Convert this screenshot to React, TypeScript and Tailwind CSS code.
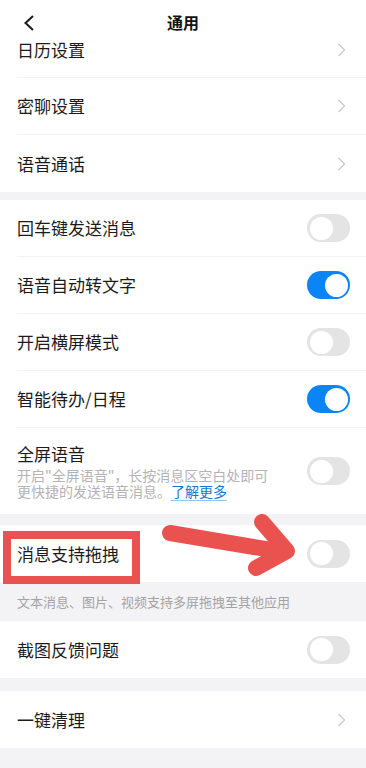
import React from "react";

function Toggle({ on }: { on?: boolean }) {
  return (
    <div
      className={
        on
          ? "flex h-[28px] w-[43px] shrink-0 items-center justify-end rounded-full bg-[#0b84f5] p-[2.5px]"
          : "flex h-[28px] w-[43px] shrink-0 items-center justify-start rounded-full bg-[#e4e4e4] p-[2.5px]"
      }
    >
      <div className="h-[23px] w-[23px] rounded-full bg-white" />
    </div>
  );
}

function Chevron() {
  return (
    <svg width="9" height="14" viewBox="0 0 9 14" className="shrink-0">
      <polyline points="1.5,1 7.5,7 1.5,13" fill="none" stroke="#c9c9c9" strokeWidth="1.3" />
    </svg>
  );
}

function Row({
  label,
  toggle,
  on,
  last,
  className = "h-[57px]",
}: {
  label: string;
  toggle?: boolean;
  on?: boolean;
  last?: boolean;
  className?: string;
}) {
  return (
    <div className="bg-white pl-[17px]">
      <div
        className={`flex items-center justify-between ${className} ${
          toggle ? "pr-[16px]" : "pr-[20px]"
        } ${last ? "" : "border-b border-[#f3f3f3]"}`}
      >
        <span className="text-[17px] leading-[22px] text-[#1b1b1b]">{label}</span>
        {toggle ? <Toggle on={on} /> : <Chevron />}
      </div>
    </div>
  );
}

export default function App() {
  return (
    <div className="relative min-h-[768px] w-full bg-[#f3f3f5] font-['Noto_Sans_CJK_SC','Noto_Sans',sans-serif]">
      {/* header */}
      <div className="grid h-[36px] grid-cols-[1fr_auto_1fr] items-start bg-white pt-[11px]">
        <div className="pl-[23px] pt-[4px]">
          <svg width="12" height="16" viewBox="0 0 12 16">
            <polyline points="10,1 2.5,8 10,15" fill="none" stroke="#1b1b1b" strokeWidth="2" />
          </svg>
        </div>
        <h1 className="text-[16px] font-bold leading-[22px] text-[#111]">通用</h1>
        <div />
      </div>

      <Row label="日历设置" className="h-[42px] pb-[14px]" />
      <Row label="密聊设置" />
      <Row label="语音通话" last />

      <div className="h-[8px]" />

      <Row label="回车键发送消息" toggle />
      <Row label="语音自动转文字" toggle on />
      <Row label="开启横屏模式" toggle />
      <Row label="智能待办/日程" toggle on />
      <div className="bg-white pl-[17px]">
        <div className="flex h-[86px] items-center justify-between pr-[16px]">
          <div className="flex flex-col">
            <span className="text-[17px] leading-[22px] text-[#1b1b1b]">全屏语音</span>
            <span className="mt-[2px] text-[14px] leading-[16px] text-[#b3b3b3]">
              开启"全屏语音"，长按消息区空白处即可
            </span>
            <span className="text-[14px] leading-[16px] text-[#b3b3b3]">
              更快捷的发送语音消息。
              <span className="text-[#1677d2] underline decoration-[#8cc4f2] underline-offset-[3px]">
                了解更多
              </span>
            </span>
          </div>
          <Toggle />
        </div>
      </div>

      <div className="h-[11px]" />

      <Row label="消息支持拖拽" toggle last />
      <div className="flex h-[39px] items-center pl-[17px] text-[13px] text-[#a3a3a3]">
        文本消息、图片、视频支持多屏拖拽至其他应用
      </div>

      <Row label="截图反馈问题" toggle last />

      <div className="h-[13px]" />

      <Row label="一键清理" last />

      {/* annotation: red box */}
      <div className="pointer-events-none absolute left-[3px] top-[531px] h-[53px] w-[137px] border-[8px] border-[#ea524f]" />

      {/* annotation: red arrow */}
      <svg
        className="pointer-events-none absolute left-0 top-0"
        width="366"
        height="768"
        viewBox="0 0 366 768"
      >
        <g fill="none" stroke="#ea524f" strokeWidth="16" strokeLinecap="round" strokeLinejoin="round">
          <path d="M170 533 L284 552" />
          <path d="M262 522 L287 551 L256 568" />
        </g>
      </svg>
    </div>
  );
}
